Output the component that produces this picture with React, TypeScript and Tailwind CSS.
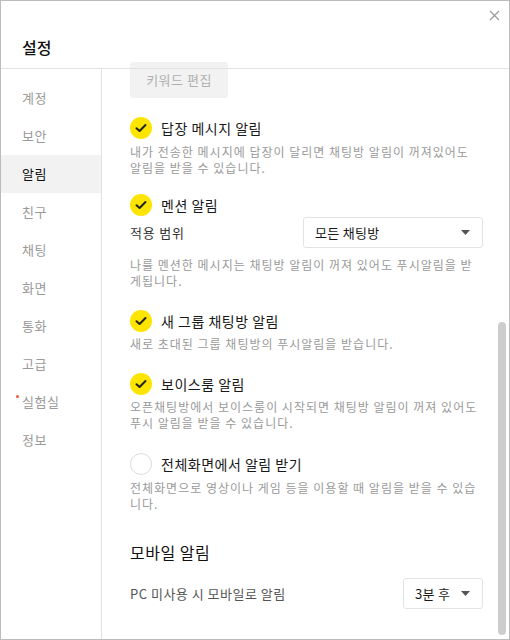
import type { ReactNode } from 'react';

const font = { fontFamily: '"Noto Sans CJK KR", "Noto Sans", sans-serif' };

const menu = ['계정', '보안', '알림', '친구', '채팅', '화면', '통화', '고급', '실험실', '정보'];

function Check({ on }: { on: boolean }) {
  if (!on) {
    return <span className="block h-[22px] w-[22px] shrink-0 rounded-full border border-[#dcdcdc] bg-white" />;
  }
  return (
    <span className="flex h-[22px] w-[22px] shrink-0 items-center justify-center rounded-full bg-[#fee500]">
      <svg width="12" height="10" viewBox="0 0 12 10" fill="none">
        <path d="M1.5 5.2 L4.6 8 L10.5 2" stroke="#222" strokeWidth="2" strokeLinecap="round" strokeLinejoin="round" />
      </svg>
    </span>
  );
}

function Option({ on, label, children, className }: { on: boolean; label: string; children?: ReactNode; className?: string }) {
  return (
    <div className={className}>
      <div className="flex items-center gap-[9px]">
        <Check on={on} />
        <span className="text-[14px] tracking-[0.5px] text-[#191919]">{label}</span>
      </div>
      {children}
    </div>
  );
}

function Desc({ children, className }: { children: ReactNode; className?: string }) {
  return <p className={`text-[12px] leading-[16px] tracking-[1px] text-[#9a9a9a] ${className ?? ''}`}>{children}</p>;
}

function Select({ value, className }: { value: string; className?: string }) {
  return (
    <div className={`flex h-[31px] items-center justify-between rounded-[3px] border border-[#e3e3e3] pl-[11px] pr-[12px] ${className ?? ''}`}>
      <span className="text-[13px] tracking-[0.3px] text-[#191919]">{value}</span>
      <svg width="9" height="5" viewBox="0 0 9 5">
        <path d="M0 0 H9 L4.5 5 Z" fill="#555" />
      </svg>
    </div>
  );
}

export default function App() {
  return (
    <div className="flex h-[640px] w-[510px] flex-col overflow-hidden border border-[#bcbcbc] bg-white" style={font}>
      <header className="relative h-[68px] shrink-0 border-b border-[#e2e2e2]">
        <h1 className="absolute left-[21px] top-[34px] text-[16px] font-medium text-[#111]">설정</h1>
        <svg className="absolute right-[9px] top-[9px]" width="11" height="11" viewBox="0 0 11 11">
          <path d="M1 1 L10 10 M10 1 L1 10" stroke="#9a9a9a" strokeWidth="1.2" />
        </svg>
      </header>

      <div className="flex min-h-0 flex-1">
        <nav className="w-[101px] shrink-0 border-r border-[#e2e2e2] pt-[10px]">
          {menu.map((item) => (
            <div
              key={item}
              className={`relative flex h-[38px] items-center pl-[21px] text-[13px] tracking-[0.5px] ${
                item === '알림' ? 'bg-[#f2f2f2] text-[#111]' : 'text-[#9a9a9a]'
              }`}
            >
              {item === '실험실' ? (
                <span className="absolute left-[15px] top-[12px] h-[3px] w-[3px] rounded-full bg-[#f05a3c]" />
              ) : null}
              {item}
            </div>
          ))}
        </nav>

        <main className="flex min-w-0 flex-1">
          <div className="flex-1 pl-[28px] pr-[13px]">
            <div className="-mt-[7px] flex h-[36px] w-[98px] items-center justify-center rounded-[3px] bg-[#f2f2f2] text-[13px] tracking-[0.5px] text-[#b0b0b0]">
              키워드 편집
            </div>

            <Option on label="답장 메시지 알림" className="mt-[19px]">
              <Desc className="mt-[5px]">
                내가 전송한 메시지에 답장이 달리면 채팅방 알림이 꺼져있어도
                <br />
                알림을 받을 수 있습니다.
              </Desc>
            </Option>

            <Option on label="멘션 알림" className="mt-[18px]">
              <div className="mt-[1px] flex items-center justify-between">
                <span className="text-[13px] tracking-[0.8px] text-[#333]">적용 범위</span>
                <Select value="모든 채팅방" className="w-[180px]" />
              </div>
              <Desc className="mt-[9px]">
                나를 멘션한 메시지는 채팅방 알림이 꺼져 있어도 푸시알림을 받
                <br />
                게됩니다.
              </Desc>
            </Option>

            <Option on label="새 그룹 채팅방 알림" className="mt-[21px]">
              <Desc className="mt-[4px]">새로 초대된 그룹 채팅방의 푸시알림을 받습니다.</Desc>
            </Option>

            <Option on label="보이스룸 알림" className="mt-[21px]">
              <Desc className="mt-[4px]">
                오픈채팅방에서 보이스룸이 시작되면 채팅방 알림이 꺼져 있어도
                <br />
                푸시 알림을 받을 수 있습니다.
              </Desc>
            </Option>

            <Option on={false} label="전체화면에서 알림 받기" className="mt-[22px]">
              <Desc className="mt-[5px]">
                전체화면으로 영상이나 게임 등을 이용할 때 알림을 받을 수 있습
                <br />
                니다.
              </Desc>
            </Option>

            <h2 className="mt-[28px] text-[16px] tracking-[0.5px] text-[#111]">모바일 알림</h2>

            <div className="mt-[14px] flex items-center justify-between">
              <span className="text-[13px] tracking-[0.5px] text-[#555]">PC 미사용 시 모바일로 알림</span>
              <Select value="3분 후" className="w-[80px]" />
            </div>
          </div>

          <div className="w-[13px] shrink-0 pr-[3px] pt-[253px] pb-[4px]">
            <div className="ml-auto h-full w-[8px] rounded-full bg-[#cdcdcd]" />
          </div>
        </main>
      </div>
    </div>
  );
}
